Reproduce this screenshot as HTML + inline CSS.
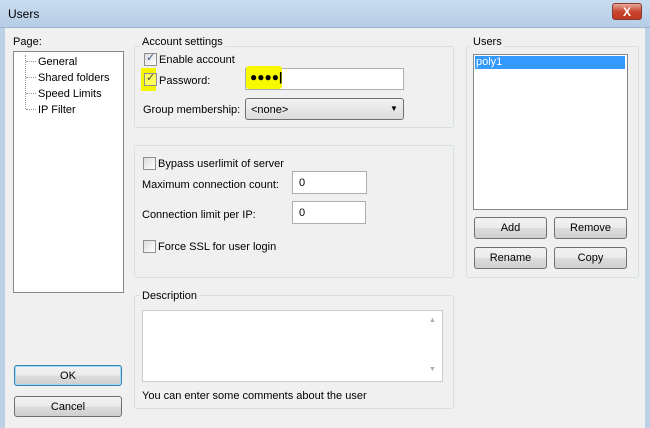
<!DOCTYPE html>
<html><head><style>
*{box-sizing:border-box}
body{margin:0;width:650px;height:428px;overflow:hidden;font-family:"Liberation Sans",sans-serif;font-size:11px;color:#000;background:#f0f0f0;position:relative}
.a{position:absolute}
.title{left:0;top:0;width:650px;height:28px;background:linear-gradient(#c9dcef,#b6cde6);border-bottom:1px solid #9fb6d0}
.frame{left:0;top:28px;width:5px;height:400px;background:#bcd1e8}
.frame2{left:645px;top:28px;width:5px;height:400px;background:#bcd1e8}
.grp{border:1px solid #d5dfe5;border-radius:3px}
.lbl{background:#f0f0f0;padding:0 2px}
.box{background:#fff;border:1px solid #abadb3}
.btn{border:1px solid #707070;border-radius:3px;background:linear-gradient(#f2f2f2 0,#ebebeb 50%,#dddddd 51%,#cfcfcf 100%);text-align:center;line-height:21px}
.cb{width:13px;height:13px;border:1px solid #8f8f8f;background:linear-gradient(135deg,#dcdcdc,#fff)}
</style></head><body>
<div class="a title"></div>
<div class="a" style="left:8px;top:7px;font-size:12px">Users</div>
<div class="a" style="left:612px;top:3px;width:30px;height:17px;border-radius:3px;border:1px solid #8a3a30;background:linear-gradient(#e9a99b,#c7462f 50%,#c23820);color:#fff;font-weight:bold;text-align:center;line-height:16px;font-size:12px">X</div>
<div class="a frame"></div><div class="a frame2"></div>

<div class="a" style="left:13px;top:36px">Page:</div>
<div class="a box" style="left:13px;top:51px;width:111px;height:242px;border-color:#828790"></div>
<div class="a" style="left:25px;top:55px;width:1px;height:54px;border-left:1px dotted #999"></div>
<div class="a" style="left:26px;top:61px;width:10px;border-top:1px dotted #999"></div>
<div class="a" style="left:26px;top:77px;width:10px;border-top:1px dotted #999"></div>
<div class="a" style="left:26px;top:93px;width:10px;border-top:1px dotted #999"></div>
<div class="a" style="left:26px;top:109px;width:10px;border-top:1px dotted #999"></div>
<div class="a" style="left:38px;top:54px;line-height:16px">General<br>Shared folders<br>Speed Limits<br>IP Filter</div>

<div class="a grp" style="left:134px;top:46px;width:320px;height:82px"></div>
<div class="a lbl" style="left:140px;top:36px">Account settings</div>
<div class="a cb" style="left:144px;top:53px"></div><div class="a" style="left:146px;top:51px;color:#3a5a9a;font-size:11px">✓</div>
<div class="a" style="left:159px;top:54px">Enable account</div>
<div class="a" style="left:141px;top:68px;width:15px;height:23px;background:#f5f500"></div>
<div class="a cb" style="left:144px;top:73px;background:#ffff60"></div><div class="a" style="left:146px;top:71px;color:#444">✓</div>
<div class="a" style="left:159px;top:75px">Password:</div>
<div class="a box" style="left:245px;top:68px;width:159px;height:22px"></div>
<div class="a" style="left:246px;top:66px;width:36px;height:23px;background:#f8f800;border-radius:3px"></div>
<div class="a" style="left:250px;top:70px;font-weight:bold;font-size:12px">●●●●|</div>
<div class="a" style="left:143px;top:104px">Group membership:</div>
<div class="a" style="left:245px;top:98px;width:159px;height:22px;border:1px solid #707070;border-radius:3px;background:linear-gradient(#f2f2f2,#dcdcdc)"></div>
<div class="a" style="left:251px;top:104px">&lt;none&gt;</div>
<div class="a" style="left:390px;top:104px;font-size:8px">▼</div>

<div class="a grp" style="left:134px;top:145px;width:320px;height:133px"></div>
<div class="a cb" style="left:143px;top:157px"></div>
<div class="a" style="left:158px;top:158px">Bypass userlimit of server</div>
<div class="a" style="left:142px;top:179px">Maximum connection count:</div>
<div class="a box" style="left:292px;top:171px;width:75px;height:23px"></div>
<div class="a" style="left:299px;top:177px">0</div>
<div class="a" style="left:142px;top:209px">Connection limit per IP:</div>
<div class="a box" style="left:292px;top:201px;width:74px;height:23px"></div>
<div class="a" style="left:299px;top:207px">0</div>
<div class="a cb" style="left:143px;top:240px"></div>
<div class="a" style="left:158px;top:241px">Force SSL for user login</div>

<div class="a grp" style="left:134px;top:295px;width:320px;height:114px"></div>
<div class="a lbl" style="left:140px;top:290px">Description</div>
<div class="a box" style="left:142px;top:310px;width:301px;height:72px;border-color:#ccc"></div>
<div class="a" style="left:429px;top:317px;font-size:7px;color:#aaa">▲</div>
<div class="a" style="left:429px;top:366px;font-size:7px;color:#aaa">▼</div>
<div class="a" style="left:142px;top:390px">You can enter some comments about the user</div>

<div class="a grp" style="left:466px;top:46px;width:173px;height:232px"></div>
<div class="a lbl" style="left:471px;top:36px">Users</div>
<div class="a box" style="left:473px;top:54px;width:155px;height:156px;border-color:#828790"></div>
<div class="a" style="left:475px;top:56px;width:150px;height:13px;background:#3399ff;color:#fff;padding-left:1px;line-height:13px">poly1</div>
<div class="a btn" style="left:474px;top:217px;width:73px;height:22px">Add</div>
<div class="a btn" style="left:554px;top:217px;width:73px;height:22px">Remove</div>
<div class="a btn" style="left:474px;top:247px;width:73px;height:22px">Rename</div>
<div class="a btn" style="left:554px;top:247px;width:73px;height:22px">Copy</div>

<div class="a btn" style="left:14px;top:365px;width:108px;height:21px;line-height:20px;border-color:#3c7fb1;box-shadow:inset 0 0 0 1px #9fdcf7">OK</div>
<div class="a btn" style="left:14px;top:396px;width:108px;height:21px;line-height:20px">Cancel</div>
</body></html>
